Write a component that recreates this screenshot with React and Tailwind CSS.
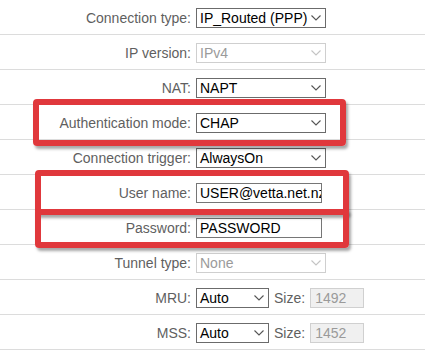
import React from "react";

const font = { fontFamily: '"Liberation Sans", Arial, sans-serif' };

function Chevron({ disabled }) {
  return (
    <svg width="10" height="6" viewBox="0 0 10 6" className="shrink-0">
      <polyline
        points="0.5,0.5 5,5 9.5,0.5"
        fill="none"
        stroke={disabled ? "#c4c4c4" : "#555"}
        strokeWidth="1.1"
      />
    </svg>
  );
}

function Select({ value, disabled, w = "w-[130px]" }) {
  return (
    <div
      className={`${w} h-[20px] border flex items-center justify-between pl-[3px] pr-[4px] text-[14px] leading-none ${
        disabled ? "border-[#cfcfcf] text-[#9a9a9a] bg-white" : "border-[#6b6b6b] text-black bg-white"
      }`}
    >
      <span className="whitespace-nowrap">{value}</span>
      <Chevron disabled={disabled} />
    </div>
  );
}

function Input({ value }) {
  return (
    <div className="w-[126px] h-[20px] border border-[#767676] flex items-center pl-[3px] text-[14px] leading-none text-black bg-white overflow-hidden">
      <span className="whitespace-nowrap">{value}</span>
    </div>
  );
}

function SizeBox({ value }) {
  return (
    <div className="w-[54px] h-[20px] border border-[#d0d0d0] bg-[#f0f0f0] flex items-center pl-[4px] text-[14px] leading-none text-[#9a9a9a]">
      {value}
    </div>
  );
}

function Row({ label, children }) {
  return (
    <div className="h-[35px] border-b border-[#dcdcdc] pt-[8px] flex items-start">
      <div className="w-[191px] h-[20px] flex items-center justify-end text-[14px] leading-none text-[#5f5f5f] whitespace-nowrap">
        {label}
      </div>
      <div className="ml-[5px] flex items-center">{children}</div>
    </div>
  );
}

function RedBox({ className }) {
  return (
    <div
      className={`absolute border-[6px] border-[#e0383c] rounded-[4px] shadow-[2px_3px_3px_rgba(0,0,0,0.35)] pointer-events-none ${className}`}
    />
  );
}

export default function App() {
  return (
    <div className="relative w-[425px] h-[353px] bg-white overflow-hidden" style={font}>
      <Row label="Connection type:">
        <Select value="IP_Routed (PPP)" />
      </Row>
      <Row label="IP version:">
        <Select value="IPv4" disabled />
      </Row>
      <Row label="NAT:">
        <Select value="NAPT" />
      </Row>
      <Row label="Authentication mode:">
        <Select value="CHAP" />
      </Row>
      <Row label="Connection trigger:">
        <Select value="AlwaysOn" />
      </Row>
      <Row label="User name:">
        <Input value="USER@vetta.net.nz" />
      </Row>
      <Row label="Password:">
        <Input value="PASSWORD" />
      </Row>
      <Row label="Tunnel type:">
        <Select value="None" disabled />
      </Row>
      <Row label="MRU:">
        <Select value="Auto" w="w-[73px]" />
        <span className="ml-[5px] mr-[5px] text-[14px] leading-none text-[#5f5f5f]">Size:</span>
        <SizeBox value="1492" />
      </Row>
      <Row label="MSS:">
        <Select value="Auto" w="w-[73px]" />
        <span className="ml-[5px] mr-[5px] text-[14px] leading-none text-[#5f5f5f]">Size:</span>
        <SizeBox value="1452" />
      </Row>

      <RedBox className="left-[33px] top-[99px] w-[313px] h-[47px]" />
      <RedBox className="left-[35px] top-[170px] w-[314px] h-[45px]" />
      <RedBox className="left-[35px] top-[209px] w-[314px] h-[39px]" />
    </div>
  );
}
